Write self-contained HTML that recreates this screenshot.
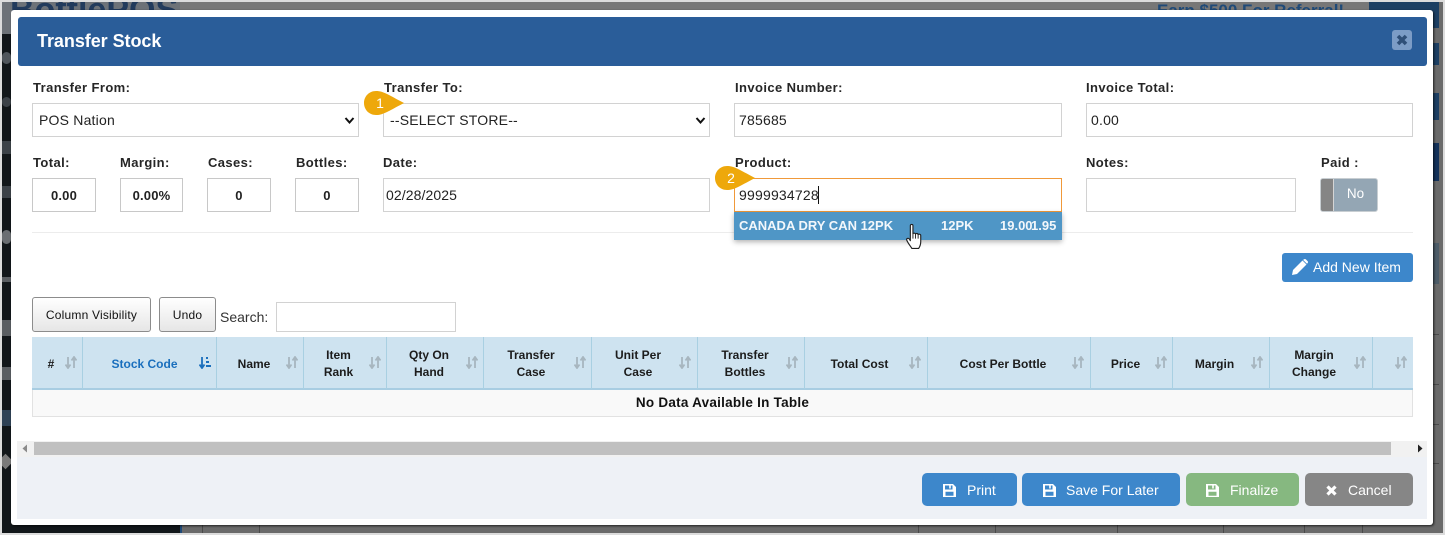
<!DOCTYPE html>
<html><head><meta charset="utf-8"><style>
*{box-sizing:border-box}
html,body{margin:0;padding:0;width:1445px;height:535px;overflow:hidden;background:#dcdcdc;font-family:"Liberation Sans",sans-serif}
.a{position:absolute}
.lbl{position:absolute;font-size:13px;font-weight:bold;color:#262626;letter-spacing:.4px;line-height:15px;white-space:nowrap}
.inp{position:absolute;background:#fff;border:1px solid #d2d2d2;font-size:14px;color:#222;padding-left:6px;white-space:nowrap;letter-spacing:.2px}
.th{position:absolute;top:337px;height:52px;padding-top:2px;border-right:1px solid #a9d0e2;font-size:12px;font-weight:bold;color:#1c1c1c;text-align:center;line-height:17px;display:flex;align-items:center;justify-content:center}
.th svg{position:absolute;top:19px}
.btn{position:absolute;top:473px;height:33px;border-radius:5px;color:#fff;font-size:14px;line-height:34px;white-space:nowrap}
.btn svg,.btn span{position:absolute}
.sb{position:absolute;left:0;width:9px;background:#50565c}
.gl{position:absolute;top:523px;width:1px;height:8px;background:#4a4a4a}
</style></head><body>
<div class="a" style="left:2px;top:2px;width:1441px;height:531px;background:#6a6a6a;overflow:hidden">
 <div class="a" style="left:0;top:0;width:178px;height:531px;background:#12171a"></div>
 <div class="a" style="left:0;top:0;width:178px;height:32px;background:#6d7278"></div>
 <div class="a" style="left:178px;top:0;width:1190px;height:8px;background:#777"></div>
 <div class="a" style="left:8px;top:-11px;font-size:34px;font-weight:bold;color:#223b5c;white-space:nowrap;line-height:38px">BottlePOS</div>
 <div class="a" style="left:1155px;top:-1px;font-size:17px;font-weight:bold;color:#1f4a78;white-space:nowrap">Earn $500 For Referral!</div>
 <div class="a" style="left:1367px;top:0;width:70px;height:26px;background:#1c3f63"></div>
 <div class="a" style="left:1367px;top:41px;width:70px;height:22px;background:#1c3f63"></div>
 <div class="a" style="left:1367px;top:91px;width:70px;height:27px;background:#1c3f63"></div>
 <div class="a" style="left:1367px;top:141px;width:70px;height:38px;background:#14325a"></div>
 <div class="a" style="left:1367px;top:241px;width:70px;height:41px;background:#4d5c68"></div>
 <div class="a" style="left:1367px;top:332px;width:70px;height:1px;background:#4a4a4a"></div>
 <div class="a" style="left:1367px;top:382px;width:70px;height:1px;background:#4a4a4a"></div>
 <div class="a" style="left:1367px;top:422px;width:70px;height:1px;background:#4a4a4a"></div>
 <div class="a" style="left:1367px;top:461px;width:70px;height:1px;background:#4a4a4a"></div>
 <div class="sb" style="top:50px;height:12px;border-radius:5px"></div>
 <div class="sb" style="top:95px;height:10px;border-radius:6px;background:#3c4248"></div>
 <div class="sb" style="top:139px;height:13px;background:#3c4248"></div>
 <div class="sb" style="top:184px;height:12px;background:#3c4248"></div>
 <div class="sb" style="top:228px;height:14px;border-radius:5px;background:#6a6e72"></div>
 <div class="sb" style="top:275px;height:5px;background:#5a5e62"></div>
 <div class="sb" style="top:318px;height:16px;background:#5a5e62"></div>
 <div class="sb" style="top:365px;height:13px;background:#5a5e62"></div>
 <div class="sb" style="top:408px;height:16px;background:#2f4256"></div>
 <div class="a" style="left:-2px;top:454px;width:11px;height:11px;background:#7a7a7a;transform:rotate(45deg)"></div>
 <div class="a" style="left:178px;top:515px;width:2px;height:16px;background:#1f4a78"></div>
 <div class="a" style="left:180px;top:515px;width:1261px;height:16px;background:#6a6a6a"></div>
 <div class="gl" style="left:200px"></div><div class="gl" style="left:257px"></div><div class="gl" style="left:916px"></div><div class="gl" style="left:993px"></div><div class="gl" style="left:1115px"></div><div class="gl" style="left:1221px"></div><div class="gl" style="left:1302px"></div><div class="gl" style="left:1360px"></div>
</div>
<div class="a" style="left:11px;top:10px;width:1422px;height:515px;background:#fff;border-radius:3px;box-shadow:1px 1px 2px rgba(0,0,0,.7)"></div>
<div class="a" style="left:18px;top:17px;width:1409px;height:49px;background:#2a5d99;border-radius:3px;color:#fff;font-size:18px;font-weight:bold;line-height:48px;padding-left:19px;letter-spacing:-.05px">Transfer Stock</div>
<div class="a" style="left:1392px;top:30px;width:20px;height:20px;background:#7c9cc6;border-radius:3px"><svg width="20" height="20" viewBox="0 0 20 20"><path d="M6 6L14 14M14 6L6 14" stroke="#2f4f78" stroke-width="3.6"/></svg></div>

<div class="lbl" style="left:33px;top:80px">Transfer From:</div>
<div class="lbl" style="left:384px;top:80px">Transfer To:</div>
<div class="lbl" style="left:735px;top:80px">Invoice Number:</div>
<div class="lbl" style="left:1086px;top:80px">Invoice Total:</div>
<div class="inp" style="left:32px;top:103px;width:327px;height:34px;line-height:32px">POS Nation<svg class="a" style="left:311px;top:12px" width="11" height="9" viewBox="0 0 11 9"><path d="M1.500 2L5.500 6.500L9.500 2" fill="none" stroke="#111" stroke-width="2"/></svg></div>
<div class="inp" style="left:383px;top:103px;width:327px;height:34px;line-height:32px">--SELECT STORE--<svg class="a" style="left:311px;top:12px" width="11" height="9" viewBox="0 0 11 9"><path d="M1.500 2L5.500 6.500L9.500 2" fill="none" stroke="#111" stroke-width="2"/></svg></div>
<div class="inp" style="left:734px;top:103px;width:328px;height:34px;line-height:32px;padding-left:4px">785685</div>
<div class="inp" style="left:1086px;top:103px;width:327px;height:34px;line-height:32px;padding-left:4px">0.00</div>

<svg class="a" style="left:363px;top:90px" width="42" height="26" viewBox="0 0 42 26"><path d="M13 1C20 1 24 4 41 13C24 22 20 25 13 25C6 25 1 19.500 1 13C1 6.500 6 1 13 1Z" fill="#eea80b"/><text x="17" y="18" font-family="Liberation Sans" font-size="14" fill="#fff" text-anchor="middle">1</text></svg>

<div class="lbl" style="left:33px;top:155px">Total:</div>
<div class="lbl" style="left:120px;top:155px">Margin:</div>
<div class="lbl" style="left:208px;top:155px">Cases:</div>
<div class="lbl" style="left:296px;top:155px">Bottles:</div>
<div class="lbl" style="left:383px;top:155px">Date:</div>
<div class="lbl" style="left:735px;top:155px">Product:</div>
<div class="lbl" style="left:1086px;top:155px">Notes:</div>
<div class="lbl" style="left:1321px;top:155px">Paid :</div>

<div class="inp" style="left:32px;top:178px;width:64px;height:34px;line-height:33px;padding:0;text-align:center;font-weight:bold;font-size:13px;border-color:#c8c8c8">0.00</div>
<div class="inp" style="left:120px;top:178px;width:63px;height:34px;line-height:33px;padding:0;text-align:center;font-weight:bold;font-size:13px;border-color:#c8c8c8">0.00%</div>
<div class="inp" style="left:207px;top:178px;width:64px;height:34px;line-height:33px;padding:0;text-align:center;font-weight:bold;font-size:13px;border-color:#c8c8c8">0</div>
<div class="inp" style="left:295px;top:178px;width:64px;height:34px;line-height:33px;padding:0;text-align:center;font-weight:bold;font-size:13px;border-color:#c8c8c8">0</div>
<div class="inp" style="left:383px;top:178px;width:327px;height:34px;line-height:33px;padding-left:2px;font-size:14px;letter-spacing:.1px">02/28/2025</div>
<div class="inp" style="left:734px;top:178px;width:328px;height:34px;line-height:33px;padding-left:4px;border-color:#f0993a">9999934728<span class="a" style="left:83px;top:7px;width:1px;height:18px;background:#111"></span></div>
<div class="inp" style="left:1086px;top:178px;width:210px;height:34px"></div>
<div class="a" style="left:1320px;top:178px;width:58px;height:34px;background:#94a6b4;border-radius:3px;color:#fff;font-size:13.500px;line-height:30px;text-align:center;padding-left:13px;border:1px solid #c8ced2">No</div>
<div class="a" style="left:1321px;top:179px;width:13px;height:32px;background:#858585;border-right:1px solid #d5d5d5;border-radius:2px 0 0 2px"></div>

<svg class="a" style="left:714px;top:165px" width="42" height="26" viewBox="0 0 42 26"><path d="M13 1C20 1 24 4 41 13C24 22 20 25 13 25C6 25 1 19.500 1 13C1 6.500 6 1 13 1Z" fill="#eea80b"/><text x="17" y="18" font-family="Liberation Sans" font-size="14" fill="#fff" text-anchor="middle">2</text></svg>

<div class="a" style="left:32px;top:232px;width:1381px;height:1px;background:#ececec"></div>
<div class="a" style="left:734px;top:212px;width:328px;height:28px;background:#4f96c6;box-shadow:0 2px 5px rgba(0,0,0,.3);color:#f2f7fb;font-size:13px;font-weight:bold;line-height:28px">
 <span class="a" style="left:5px;white-space:nowrap">CANADA DRY CAN 12PK</span><span class="a" style="left:207px">12PK</span><span class="a" style="left:266px">19.00</span><span class="a" style="left:297px">1.95</span>
</div>
<svg class="a" style="left:905px;top:223px" width="19" height="27" viewBox="0 0 18 26"><path d="M5 2.500C5 1 7.500 1 7.500 2.500V10.500C7.500 9.500 10 9.500 10 10.800C10 9.800 12.500 9.800 12.500 11.300C12.500 10.500 15 10.500 15 12V18C15 21 14 23 13 24.500H6.500C5 22 3 20 1.500 16.500C1 15 3 14 4 15.500L5 17Z" fill="#fff" stroke="#222" stroke-width="1.100" stroke-linejoin="round"/><path d="M7.500 10.500V15M10 11V15M12.500 11.500V15" stroke="#222" stroke-width=".9"/></svg>

<div class="a" style="left:1282px;top:253px;width:131px;height:29px;background:#3d87cb;border-radius:3px;color:#fff;font-size:14px;line-height:28px;padding-left:31px;white-space:nowrap">Add New Item</div>
<svg class="a" style="left:1291px;top:258px" width="18" height="18" viewBox="0 0 18 18"><path d="M1 17L2 12L11.500 2.500L15.500 6.500L6 16Z" fill="#fff"/><path d="M12.800 1.500C13.500.8 14.300.8 15 1.500L16.500 3C17.200 3.700 17.200 4.500 16.500 5.200L16 5.800L12 1.900Z" fill="#fff"/></svg>

<div class="a" style="left:32px;top:297px;width:119px;height:35px;border:1px solid #8c8c8c;border-radius:3px;background:linear-gradient(#fff,#e6e6e6);font-size:12px;letter-spacing:.2px;line-height:34px;text-align:center;color:#111">Column Visibility</div>
<div class="a" style="left:159px;top:297px;width:57px;height:35px;border:1px solid #8c8c8c;border-radius:3px;background:linear-gradient(#fff,#e6e6e6);font-size:12px;letter-spacing:.2px;line-height:34px;text-align:center;color:#111">Undo</div>
<div class="a" style="left:220px;top:309px;font-size:14px;color:#333;line-height:16px">Search:</div>
<div class="inp" style="left:276px;top:302px;width:180px;height:30px"></div>

<div class="a" style="left:32px;top:337px;width:1381px;height:53px;background:#cee3f0;border-bottom:2px solid #a8cde2"></div>
<div class="a" style="left:32px;top:390px;width:1381px;height:27px;background:#f9f9f9;border:1px solid #e2e2e2;border-top:0;font-size:13.500px;font-weight:bold;color:#111;text-align:center;line-height:26px;letter-spacing:.25px">No Data Available In Table</div>

<div class="th" style="left:32px;width:51px;padding-right:12px">#<svg style="left:33px" width="12" height="13" viewBox="0 0 12 13"><path d="M3 1V11M.5 8.500L3 12L5.500 8.500M9 12V2M6.500 4.500L9 1L11.500 4.500" fill="none" stroke="#a7b6bf" stroke-width="1.800"/></svg></div>
<div class="th" style="left:83px;width:134px;padding-right:10px;color:#1a6fbd">Stock Code<svg style="left:116px" width="13" height="13" viewBox="0 0 13 13"><path d="M3 1V11M.5 8.500L3 12L5.500 8.500" fill="none" stroke="#1a6fbd" stroke-width="1.800"/><path d="M7 1H9V3H7ZM7 5H10V7H7ZM7 9H12V11H7Z" fill="#1a6fbd"/></svg></div>
<div class="th" style="left:217px;width:87px;padding-right:12px">Name<svg style="left:69px" width="12" height="13" viewBox="0 0 12 13"><path d="M3 1V11M.5 8.500L3 12L5.500 8.500M9 12V2M6.500 4.500L9 1L11.500 4.500" fill="none" stroke="#a7b6bf" stroke-width="1.800"/></svg></div>
<div class="th" style="left:304px;width:83px;padding-right:13px">Item<br>Rank<svg style="left:65px" width="12" height="13" viewBox="0 0 12 13"><path d="M3 1V11M.5 8.500L3 12L5.500 8.500M9 12V2M6.500 4.500L9 1L11.500 4.500" fill="none" stroke="#a7b6bf" stroke-width="1.800"/></svg></div>
<div class="th" style="left:387px;width:97px;padding-right:12px">Qty On<br>Hand<svg style="left:79px" width="12" height="13" viewBox="0 0 12 13"><path d="M3 1V11M.5 8.500L3 12L5.500 8.500M9 12V2M6.500 4.500L9 1L11.500 4.500" fill="none" stroke="#a7b6bf" stroke-width="1.800"/></svg></div>
<div class="th" style="left:484px;width:108px;padding-right:13px">Transfer<br>Case<svg style="left:90px" width="12" height="13" viewBox="0 0 12 13"><path d="M3 1V11M.5 8.500L3 12L5.500 8.500M9 12V2M6.500 4.500L9 1L11.500 4.500" fill="none" stroke="#a7b6bf" stroke-width="1.800"/></svg></div>
<div class="th" style="left:592px;width:106px;padding-right:13px">Unit Per<br>Case<svg style="left:87px" width="12" height="13" viewBox="0 0 12 13"><path d="M3 1V11M.5 8.500L3 12L5.500 8.500M9 12V2M6.500 4.500L9 1L11.500 4.500" fill="none" stroke="#a7b6bf" stroke-width="1.800"/></svg></div>
<div class="th" style="left:698px;width:107px;padding-right:12px">Transfer<br>Bottles<svg style="left:88px" width="12" height="13" viewBox="0 0 12 13"><path d="M3 1V11M.5 8.500L3 12L5.500 8.500M9 12V2M6.500 4.500L9 1L11.500 4.500" fill="none" stroke="#a7b6bf" stroke-width="1.800"/></svg></div>
<div class="th" style="left:805px;width:123px;padding-right:13px">Total Cost<svg style="left:104px" width="12" height="13" viewBox="0 0 12 13"><path d="M3 1V11M.5 8.500L3 12L5.500 8.500M9 12V2M6.500 4.500L9 1L11.500 4.500" fill="none" stroke="#a7b6bf" stroke-width="1.800"/></svg></div>
<div class="th" style="left:928px;width:163px;padding-right:12px">Cost Per Bottle<svg style="left:144px" width="12" height="13" viewBox="0 0 12 13"><path d="M3 1V11M.5 8.500L3 12L5.500 8.500M9 12V2M6.500 4.500L9 1L11.500 4.500" fill="none" stroke="#a7b6bf" stroke-width="1.800"/></svg></div>
<div class="th" style="left:1091px;width:82px;padding-right:12px">Price<svg style="left:64px" width="12" height="13" viewBox="0 0 12 13"><path d="M3 1V11M.5 8.500L3 12L5.500 8.500M9 12V2M6.500 4.500L9 1L11.500 4.500" fill="none" stroke="#a7b6bf" stroke-width="1.800"/></svg></div>
<div class="th" style="left:1173px;width:97px;padding-right:13px">Margin<svg style="left:78px" width="12" height="13" viewBox="0 0 12 13"><path d="M3 1V11M.5 8.500L3 12L5.500 8.500M9 12V2M6.500 4.500L9 1L11.500 4.500" fill="none" stroke="#a7b6bf" stroke-width="1.800"/></svg></div>
<div class="th" style="left:1270px;width:103px;padding-right:14px">Margin<br>Change<svg style="left:84px" width="12" height="13" viewBox="0 0 12 13"><path d="M3 1V11M.5 8.500L3 12L5.500 8.500M9 12V2M6.500 4.500L9 1L11.500 4.500" fill="none" stroke="#a7b6bf" stroke-width="1.800"/></svg></div>
<svg class="a" style="left:1395px;top:356px" width="12" height="13" viewBox="0 0 12 13"><path d="M3 1V11M.5 8.500L3 12L5.500 8.500M9 12V2M6.500 4.500L9 1L11.500 4.500" fill="none" stroke="#a7b6bf" stroke-width="1.800"/></svg>

<div class="a" style="left:17px;top:441px;width:1410px;height:16px;background:#f1f1f1"></div>
<div class="a" style="left:34px;top:442px;width:1357px;height:13px;background:#c0c0c0"></div>
<svg class="a" style="left:22px;top:444px" width="6" height="9" viewBox="0 0 6 9"><path d="M5 .5V8.500L.5 4.500Z" fill="#8a8a8a"/></svg>
<svg class="a" style="left:1417px;top:444px" width="6" height="9" viewBox="0 0 6 9"><path d="M1 .5V8.500L5.500 4.500Z" fill="#222"/></svg>
<div class="a" style="left:17px;top:457px;width:1410px;height:62px;background:#eef1f6"></div>

<div class="btn" style="left:922px;width:95px;background:#3d87cb"><svg style="left:20px;top:10px" width="15" height="15" viewBox="0 0 15 15"><path fill-rule="evenodd" d="M1 1H11L14 4V14H1ZM3 2.500V6.500H10.500V2.500H8.800V5.500H7.200V2.500ZM3.500 8.800V12.800H11.500V8.800Z" fill="#fff"/></svg><span style="left:45px">Print</span></div>
<div class="btn" style="left:1022px;width:158px;background:#3d87cb"><svg style="left:20px;top:10px" width="15" height="15" viewBox="0 0 15 15"><path fill-rule="evenodd" d="M1 1H11L14 4V14H1ZM3 2.500V6.500H10.500V2.500H8.800V5.500H7.200V2.500ZM3.500 8.800V12.800H11.500V8.800Z" fill="#fff"/></svg><span style="left:44px">Save For Later</span></div>
<div class="btn" style="left:1186px;width:113px;background:#86b880"><svg style="left:19px;top:10px" width="15" height="15" viewBox="0 0 15 15"><path fill-rule="evenodd" d="M1 1H11L14 4V14H1ZM3 2.500V6.500H10.500V2.500H8.800V5.500H7.200V2.500ZM3.500 8.800V12.800H11.500V8.800Z" fill="#fff"/></svg><span style="left:44px">Finalize</span></div>
<div class="btn" style="left:1305px;width:108px;background:#868686"><svg style="left:20px;top:11px" width="13" height="13" viewBox="0 0 13 13"><path d="M2.500 2.500L10.500 10.500M10.500 2.500L2.500 10.500" stroke="#fff" stroke-width="3.200"/></svg><span style="left:43px">Cancel</span></div>
</body></html>
